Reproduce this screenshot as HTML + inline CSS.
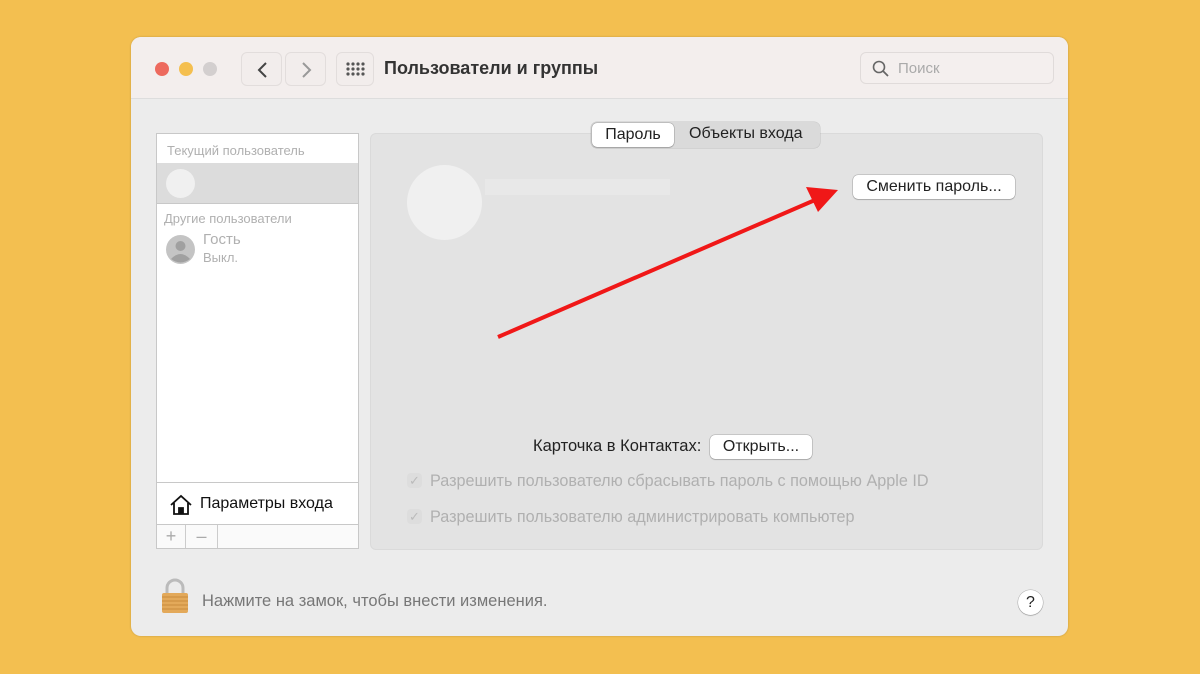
<!DOCTYPE html>
<html><head><meta charset="utf-8"><style>
*{margin:0;padding:0;box-sizing:border-box}
body{width:1200px;height:674px;background:#f3bf50;font-family:"Liberation Sans",sans-serif;position:relative;overflow:hidden}
.a{position:absolute}
.win{left:131px;top:37px;width:937px;height:599px;background:#ececec;border-radius:10px;overflow:hidden;box-shadow:0 0 2px rgba(0,0,0,.2)}
.tb{left:0;top:0;width:937px;height:62px;background:#f3eeed;border-bottom:1px solid #ddd}
.dot{width:14px;height:14px;border-radius:50%;top:25px}
.nb{top:15px;height:34px;width:41px;border:1px solid #e2dddc;border-radius:6px;background:#f2edec}
.btn{background:#fff;border-radius:5px;box-shadow:0 0 0 .5px rgba(0,0,0,.25),0 1px 1px rgba(0,0,0,.15);font-size:16px;color:#222;text-align:center;white-space:nowrap}
.g{color:#b0b0b0}
</style></head><body>
<div class="a win">
 <div class="a tb">
  <div class="a dot" style="left:24px;background:#ed6a5e"></div>
  <div class="a dot" style="left:48px;background:#f4bf4f"></div>
  <div class="a dot" style="left:72px;background:#d3cfcf"></div>
  <div class="a nb" style="left:110px"><svg width="41" height="34"><path d="M24 10 L17 17 L24 24" stroke="#444" stroke-width="2" fill="none"/></svg></div>
  <div class="a nb" style="left:154px"><svg width="41" height="34"><path d="M17 10 L24 17 L17 24" stroke="#999" stroke-width="2" fill="none"/></svg></div>
  <div class="a nb" style="left:205px;width:38px"><svg width="38" height="34"><g fill="#555">
   <circle cx="11" cy="11" r="1.6"/><circle cx="16" cy="11" r="1.6"/><circle cx="21" cy="11" r="1.6"/><circle cx="26" cy="11" r="1.6"/>
   <circle cx="11" cy="16" r="1.6"/><circle cx="16" cy="16" r="1.6"/><circle cx="21" cy="16" r="1.6"/><circle cx="26" cy="16" r="1.6"/>
   <circle cx="11" cy="21" r="1.6"/><circle cx="16" cy="21" r="1.6"/><circle cx="21" cy="21" r="1.6"/><circle cx="26" cy="21" r="1.6"/></g></svg></div>
  <div class="a" style="left:253px;top:21px;font-size:18px;font-weight:bold;color:#333">Пользователи и группы</div>
  <div class="a" style="left:729px;top:15px;width:194px;height:32px;border:1px solid #e0dbda;border-radius:6px;background:#f4efee">
   <svg class="a" style="left:11px;top:7px" width="18" height="18"><circle cx="7" cy="7" r="5.5" stroke="#666" stroke-width="1.6" fill="none"/><path d="M11 11 L16 16" stroke="#666" stroke-width="1.8"/></svg>
   <div class="a" style="left:37px;top:7px;font-size:15px;color:#aaa">Поиск</div>
  </div>
 </div>
 <div class="a" style="left:25px;top:96px;width:203px;height:416px;background:#fff;border:1px solid #c8c8c8">
  <div class="a g" style="left:10px;top:9px;font-size:13px">Текущий пользователь</div>
  <div class="a" style="left:0;top:29px;width:201px;height:41px;background:#dcdcdc;border-bottom:1px solid #c8c8c8">
   <div class="a" style="left:9px;top:6px;width:29px;height:29px;border-radius:50%;background:#f0f0f0"></div></div>
  <div class="a g" style="left:7px;top:77px;font-size:13px">Другие пользователи</div>
  <svg class="a" style="left:9px;top:101px" width="29" height="29"><circle cx="14.5" cy="14.5" r="14.5" fill="#c4c4c4"/><circle cx="14.5" cy="11" r="5" fill="#a0a0a0"/><path d="M5 24 Q14.5 14 24 24 Q14.5 31 5 24Z" fill="#a0a0a0"/></svg>
  <div class="a g" style="left:46px;top:97px;font-size:15px">Гость</div>
  <div class="a g" style="left:46px;top:116px;font-size:13px">Выкл.</div>
  <div class="a" style="left:0;top:348px;width:201px;height:1px;background:#c8c8c8"></div>
  <svg class="a" style="left:12px;top:359px" width="24" height="24"><path d="M2 12 L12 3 L22 12 M5 10 V21 H19 V10 M10 21 V15 H14 V21" stroke="#111" stroke-width="1.8" fill="none"/><rect x="10" y="15" width="4" height="6" fill="#111"/></svg>
  <div class="a" style="left:43px;top:361px;font-size:16px;color:#111">Параметры входа</div>
  <div class="a" style="left:0;top:390px;width:201px;height:24px;background:#fafafa;border-top:1px solid #c8c8c8">
   <div class="a" style="left:0;top:0;width:29px;height:23px;border-right:1px solid #ccc;color:#aaa;font-size:18px;text-align:center;line-height:22px">+</div>
   <div class="a" style="left:29px;top:0;width:32px;height:23px;border-right:1px solid #ccc;color:#aaa;font-size:18px;text-align:center;line-height:22px">–</div>
  </div>
 </div>
 <div class="a" style="left:239px;top:96px;width:673px;height:417px;background:#e3e3e3;border:1px solid #dadada;border-radius:6px">
  <div class="a" style="left:36px;top:31px;width:75px;height:75px;border-radius:50%;background:#f0f0f0"></div>
  <div class="a" style="left:114px;top:45px;width:185px;height:16px;background:#e8e8e8"></div>
 </div>
 <div class="a" style="left:460px;top:85px;width:229px;height:26px;background:#dadada;border-radius:6px;box-shadow:0 0 0 .5px rgba(0,0,0,.15)">
  <div class="a btn" style="left:1px;top:1px;width:82px;height:24px;line-height:24px">Пароль</div>
  <div class="a" style="left:98px;top:3px;font-size:16px;color:#222;white-space:nowrap">Объекты входа</div>
 </div>
 <div class="a btn" style="left:722px;top:138px;width:162px;height:24px;line-height:24px">Сменить пароль...</div>
 <div class="a" style="left:402px;top:400px;font-size:16.5px;color:#222;white-space:nowrap">Карточка в Контактах:</div>
 <div class="a btn" style="left:579px;top:398px;width:102px;height:24px;line-height:24px">Открыть...</div>
 <div class="a" style="left:276px;top:436px;width:15px;height:15px;border-radius:4px;background:#ddd;color:#bbb;font-size:13px;text-align:center;line-height:15px">✓</div>
 <div class="a g" style="left:299px;top:435px;font-size:16.2px;white-space:nowrap">Разрешить пользователю сбрасывать пароль с помощью Apple ID</div>
 <div class="a" style="left:276px;top:472px;width:15px;height:15px;border-radius:4px;background:#ddd;color:#bbb;font-size:13px;text-align:center;line-height:15px">✓</div>
 <div class="a g" style="left:299px;top:471px;font-size:16.2px;white-space:nowrap">Разрешить пользователю администрировать компьютер</div>
 <svg class="a" style="left:29px;top:541px" width="30" height="36"><path d="M7 16 V10 A8 8 0 0 1 23 10 V16" stroke="#bbb" stroke-width="3" fill="none"/><rect x="2" y="15" width="26" height="20" rx="2" fill="#e3a95a"/><g stroke="#c98a3c" stroke-width="1"><path d="M2 19H28M2 23H28M2 27H28M2 31H28"/></g></svg>
 <div class="a" style="left:71px;top:555px;font-size:16.5px;color:#777;white-space:nowrap">Нажмите на замок, чтобы внести изменения.</div>
 <div class="a" style="left:887px;top:553px;width:25px;height:25px;border-radius:50%;background:#fff;box-shadow:0 0 0 .5px rgba(0,0,0,.25),0 1px 1px rgba(0,0,0,.15);text-align:center;line-height:25px;font-size:16px;color:#222">?</div>
</div>
<svg class="a" style="left:0;top:0" width="1200" height="674"><path d="M498 337 L815 200" stroke="#f01818" stroke-width="4"/><path d="M838 190 L806 187 L818 212Z" fill="#f01818"/></svg>
</body></html>
